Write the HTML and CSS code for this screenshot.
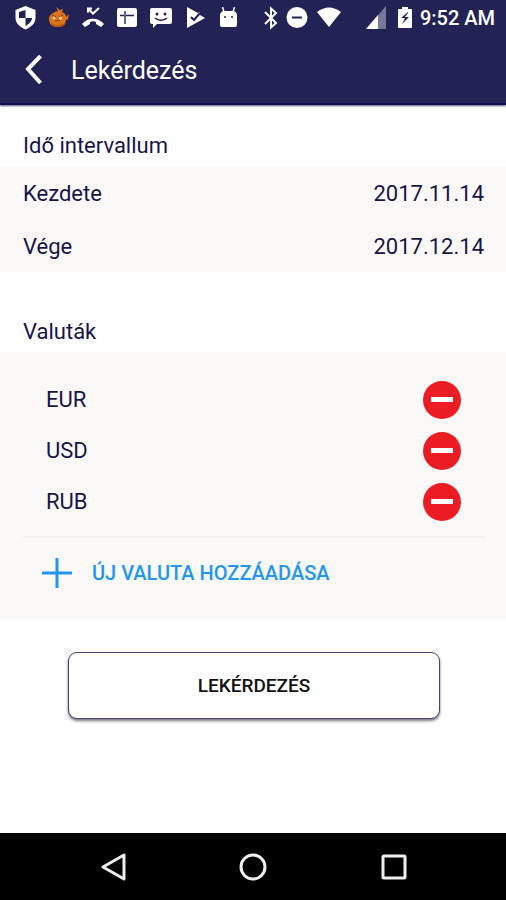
FILE: index.html
```html
<!DOCTYPE html>
<html lang="hu">
<head>
<meta charset="utf-8">
<meta name="viewport" content="width=device-width, initial-scale=1">
<title>Lekérdezés</title>
<link rel="stylesheet" href="styles.css">
</head>
<body>
<header class="top">
  <div class="status">
    <div class="notifications">
      <svg width="24" height="24" viewBox="0 0 24 24"><path fill="#fff" d="M12.500 0 22.500 4v8c0 5-4 9-10 11.500-6-2.500-10-6.500-10-11.500V4z"/><path fill="#222255" d="M12.500 4v8H6V6zM12.500 12H19c0 3-3 6-6.500 8z"/></svg>
      <svg width="24" height="24" viewBox="0 0 24 24"><path fill="#d9731c" d="M11 5 9 1l4 3 3-1-1 3c3 1 4 3 4 5l3-3-1 5-2 1c-1 5-4 7-8 7-6 0-9-3-9-8 0-4 4-7 9-8z"/><path fill="#b9540f" d="M4 17c4 3 10 3 15-1-1 4-4 5-8 5-3 0-6-1-7-4z"/><path fill="none" stroke="#8a3a0f" d="m5 9 4 2M16 9l-4 2M8 15q2-1 5 0"/><circle cx="7" cy="12" r="1.500" fill="#f3cfa4"/><circle cx="13.500" cy="12" r="1.500" fill="#f3cfa4"/></svg>
      <svg width="24" height="24" viewBox="0 0 24 24"><path fill="none" stroke="#fff" stroke-width="2" d="m7 2.500 5 5 6-5.500M7 6.500v-4h4"/><path fill="#fff" d="M1 18c6-7 16-7 22 0l-3 3-5-3v-2c-2-1-4-1-6 0v2l-5 3z"/></svg>
      <svg width="24" height="24" viewBox="0 0 24 24"><rect x="2" y="2" width="20" height="19" rx="2" fill="#fff"/><path fill="none" stroke="#222255" stroke-width="1.500" d="M5 9.500h14"/><path stroke="#66668c" stroke-width="2" d="M10 5v13"/></svg>
      <svg width="24" height="24" viewBox="0 0 24 24"><path fill="#fff" d="M3 2h18q2 0 2 2v12q0 2-2 2H8l-4 4v-4H3q-2 0-2-2V4q0-2 2-2z"/><circle cx="8" cy="8" r="1.500" fill="#222255"/><circle cx="16" cy="8" r="1.500" fill="#222255"/><path fill="none" stroke="#222255" stroke-width="1.500" d="M6 12c3 3 9 3 12 0"/></svg>
      <svg width="24" height="24" viewBox="0 0 24 24"><path fill="#fff" d="m4 1 11 6 2-1v3l5 3L4 22z"/><path fill="none" stroke="#222255" stroke-width="2" d="m8 11 3 3 6-7"/></svg>
      <svg width="24" height="24" viewBox="0 0 24 24"><path fill="#fff" d="M3 9c0-2 2-4 4-4h9c2 0 4 2 4 4v10q0 2-2 2H5q-2 0-2-2z"/><path fill="none" stroke="#fff" stroke-width="1.500" d="M7 6 5.500 1M16 6l1.500-5"/><circle cx="8" cy="11" r="1" fill="#222255"/><circle cx="15" cy="11" r="1" fill="#222255"/></svg>
    </div>
    <div class="system">
      <svg width="14" height="24" viewBox="0 0 14 24"><path fill="none" stroke="#fff" stroke-width="2" d="m1 6 11 11-5 4.500v-19L12 7 1 18"/></svg>
      <svg width="22" height="24" viewBox="0 0 22 24"><circle cx="11" cy="11.500" r="10.500" fill="#fff"/><path stroke="#222255" stroke-width="2" d="M6 11.500h10"/></svg>
      <svg class="wifi" width="26" height="24" viewBox="0 0 26 24"><path fill="#fff" d="M1 6Q13-3 25 6L13 21z"/></svg>
      <svg width="20" height="24" viewBox="0 0 20 24"><path fill="#77779a" d="M20 0v23H0z"/><path fill="#fff" d="M12 9v14H0z"/></svg>
      <svg class="battery" width="14" height="24" viewBox="0 0 14 24"><path fill="#fff" d="M4 1h6v2h3q1 0 1 1v17q0 1-1 1H1q-1 0-1-1V4q0-1 1-1h3z"/><path fill="#222255" d="m10 6-7 6h4l-3 6 7-7H7l3-4z"/></svg>
      <time class="clock">9:52 AM</time>
    </div>
  </div>
  <div class="appbar">
    <button class="back" type="button" aria-label="Vissza"><svg width="18" height="32" viewBox="0 0 18 32"><path fill="none" stroke="#fff" stroke-width="4" d="M15.500 1 3 14l12.500 14"/></svg></button>
    <h1>Lekérdezés</h1>
  </div>
</header>
<main>
  <section class="period">
    <h2>Idő intervallum</h2>
    <div class="panel">
      <button class="date" type="button"><span>Kezdete</span><span>2017.11.14</span></button>
      <button class="date" type="button"><span>Vége</span><span>2017.12.14</span></button>
    </div>
  </section>
  <section>
    <h2>Valuták</h2>
    <div class="panel currencies">
      <ul>
        <li><span>EUR</span><button class="remove" type="button" aria-label="EUR"></button></li>
        <li><span>USD</span><button class="remove" type="button" aria-label="USD"></button></li>
        <li><span>RUB</span><button class="remove" type="button" aria-label="RUB"></button></li>
      </ul>
      <button class="add" type="button"><svg width="30" height="30" viewBox="0 0 30 30"><path stroke="#2196f3" stroke-width="3" d="M15 0v30M0 15h30"/></svg>ÚJ VALUTA HOZZÁADÁSA</button>
    </div>
  </section>
  <button class="submit" type="button">LEKÉRDEZÉS</button>
</main>
<nav class="navbar">
  <button type="button" aria-label="Vissza"><svg width="28" height="28" viewBox="0 0 28 28"><path d="M26 2v24L5 14z"/></svg></button>
  <button type="button" aria-label="Kezdőképernyő"><svg width="28" height="28" viewBox="0 0 28 28"><circle cx="14" cy="14" r="12"/></svg></button>
  <button type="button" aria-label="Áttekintés"><svg width="28" height="28" viewBox="0 0 28 28"><rect x="3" y="3" width="22" height="22" rx="1"/></svg></button>
</nav>
</body>
</html>
```
FILE: styles.css
```css
* {
  box-sizing: border-box;
}

body {
  margin: 0;
  min-height: 100vh;
  display: flex;
  flex-direction: column;
  background: #fff;
  color: #17154a;
  font: 22px/28px Roboto, "Liberation Sans", sans-serif;
}

button {
  border: 0;
  padding: 0;
  background: none;
  color: inherit;
  font: inherit;
  cursor: pointer;
}

svg {
  display: block;
  flex: none;
}

.top {
  background: #222255;
  color: #fff;
  border-bottom: 2px solid #130f50;
  box-shadow: 0 1px 2px #55556f;
}

.status {
  display: flex;
  justify-content: space-between;
  height: 36px;
  padding: 0 11px 0 13px;
}

.notifications,
.system {
  display: flex;
  align-items: center;
  gap: 10px;
}

.system {
  gap: 8px;
}

.wifi {
  margin-right: 16px;
}

.battery {
  margin-left: 4px;
}

.clock {
  font-size: 20px;
  font-weight: 500;
}

.appbar {
  display: flex;
  align-items: center;
  gap: 28px;
  height: 67px;
  padding: 2px 25px 0;
}

h1 {
  margin: 0;
  font-size: 25px;
  font-weight: 400;
}

main {
  flex: 1;
}

h2 {
  margin: 0;
  padding: 0 23px 6px;
  font-size: 22px;
  font-weight: 400;
}

section {
  padding-top: 27px;
}

.period {
  padding-bottom: 19px;
}

.panel {
  background: #faf9f8;
}

.date {
  display: flex;
  justify-content: space-between;
  align-items: center;
  width: 100%;
  height: 53px;
  padding: 2px 22px 0 23px;
}

.currencies {
  padding: 22px 21px 12px 23px;
}

ul {
  list-style: none;
  margin: 0;
  padding: 0 24px 9px 23px;
  border-bottom: 2px solid #f1f0ef;
}

li {
  display: flex;
  justify-content: space-between;
  align-items: center;
  height: 51px;
}

.remove {
  display: grid;
  place-items: center;
  width: 38px;
  height: 38px;
  border-radius: 50%;
  background: #eb1c24;
}

.remove::before {
  content: "";
  width: 22px;
  height: 5px;
  background: #fff;
}

.add {
  display: flex;
  align-items: center;
  gap: 20px;
  width: 100%;
  height: 69px;
  padding: 0 19px;
  color: #2196f3;
  font-size: 20px;
  font-weight: 500;
}

.submit {
  display: block;
  width: calc(100% - 134px);
  height: 67px;
  margin: 33px 66px 33px 68px;
  border: 1px solid #45436f;
  border-radius: 9px;
  background: #fff;
  box-shadow: 0 2px 3px #77777f;
  color: #111;
  font-size: 19px;
  font-weight: 500;
}

.navbar {
  display: flex;
  justify-content: space-between;
  align-items: center;
  height: 67px;
  padding: 0 98px;
  background: #000;
}

.navbar svg {
  fill: none;
  stroke: #eee;
  stroke-width: 3;
  stroke-linejoin: round;
}
```
